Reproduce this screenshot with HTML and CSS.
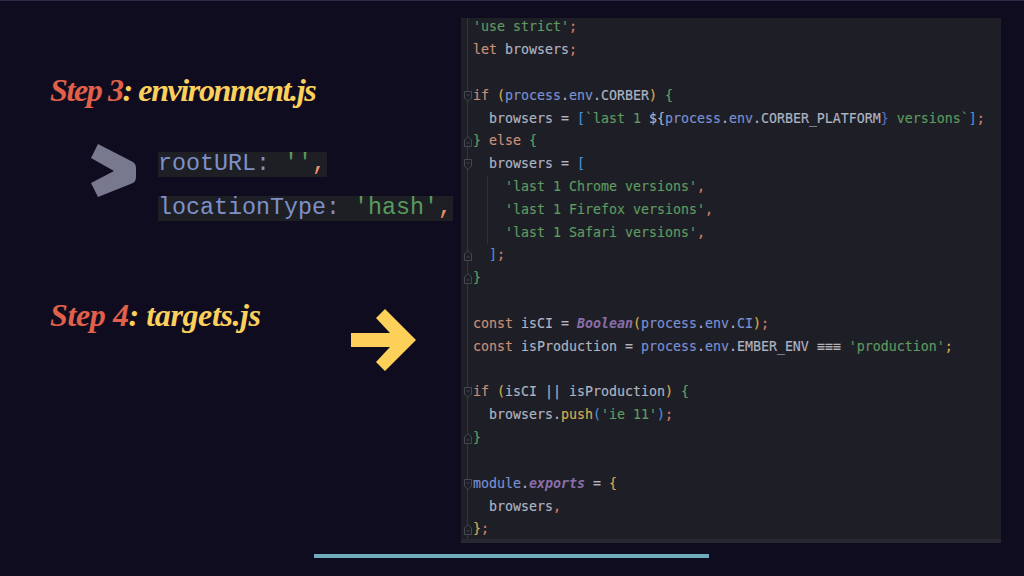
FILE: index.html
```html
<!DOCTYPE html>
<html lang="en">
<head>
<meta charset="utf-8">
<title>Step 3 and 4</title>
<link rel="stylesheet" href="styles.css">
</head>
<body>
<svg class="defs" width="0" height="0" aria-hidden="true">
  <symbol id="fold-down" viewBox="0 0 10 13"><path d="M1.5 1.5h7v6.5l-3.5 3.5-3.5-3.5z"/><path d="M3.5 5h3"/></symbol>
  <symbol id="fold-up" viewBox="0 0 10 13"><path d="M1.5 11.5h7v-6.5l-3.5-3.5-3.5 3.5z"/><path d="M3.5 8h3"/></symbol>
</svg>
<div class="slide">
  <main class="stage">
    <section class="steps">
      <h2 class="step-title step-three"><span class="step-num">Step 3</span>: environment.js</h2>
      <div class="config">
        <svg class="chevron" viewBox="0 0 50 58" aria-hidden="true">
          <path d="M8 1 43 19Q46 21 46 25V34Q46 38 43 40L8 54 1 40 24 28 1 15z"/>
        </svg>
        <div class="config-lines">
          <code class="config-line"><span class="prop">rootURL:</span> <span class="str">''</span><span class="comma">,</span></code>
          <code class="config-line"><span class="prop">locationType:</span> <span class="str">'hash'</span><span class="comma">,</span></code>
        </div>
      </div>
      <div class="step-row">
        <h2 class="step-title step-four"><span class="step-num">Step 4</span>: targets.js</h2>
        <svg class="arrow" viewBox="0 0 65 62" aria-hidden="true">
          <path d="M0 24H39L25 9 34 0 65 31 34 62 25 53 39 38H0z"/>
        </svg>
      </div>
    </section>
    <section class="editor">
      <div class="code">
        <div class="ln"><span class="s">'use strict'</span><span class="p">;</span></div>
        <div class="ln"><span class="k">let</span> browsers<span class="p">;</span></div>
        <div class="ln"></div>
        <div class="ln"><svg class="fold"><use href="#fold-down"/></svg><span class="k">if</span> <span class="y">(</span><span class="v">process</span>.<span class="v">env</span>.CORBER<span class="y">)</span> <span class="g">{</span></div>
        <div class="ln">  browsers = <span class="b">[</span><span class="s">`last 1 </span>${<span class="v">process</span>.<span class="v">env</span>.CORBER_PLATFORM<span class="b2">}</span><span class="s"> versions`</span><span class="b">]</span><span class="p">;</span></div>
        <div class="ln"><svg class="fold"><use href="#fold-up"/></svg><span class="g">}</span> <span class="k">else</span> <span class="g">{</span></div>
        <div class="ln"><svg class="fold"><use href="#fold-down"/></svg>  browsers = <span class="b">[</span></div>
        <div class="ln guide">    <span class="s">'last 1 Chrome versions'</span><span class="p">,</span></div>
        <div class="ln guide">    <span class="s">'last 1 Firefox versions'</span><span class="p">,</span></div>
        <div class="ln guide">    <span class="s">'last 1 Safari versions'</span><span class="p">,</span></div>
        <div class="ln"><svg class="fold"><use href="#fold-up"/></svg>  <span class="b">]</span><span class="p">;</span></div>
        <div class="ln"><svg class="fold"><use href="#fold-up"/></svg><span class="g">}</span></div>
        <div class="ln"></div>
        <div class="ln"><span class="k">const</span> isCI = <span class="m">Boolean</span><span class="y">(</span><span class="v">process</span>.<span class="v">env</span>.<span class="v">CI</span><span class="y">)</span><span class="p">;</span></div>
        <div class="ln"><span class="k">const</span> isProduction = <span class="v">process</span>.<span class="v">env</span>.EMBER_ENV ≡≡≡ <span class="s">'production'</span><span class="y">;</span></div>
        <div class="ln"></div>
        <div class="ln"><svg class="fold"><use href="#fold-down"/></svg><span class="k">if</span> <span class="y">(</span>isCI || isProduction<span class="y">)</span> <span class="g">{</span></div>
        <div class="ln">  browsers.<span class="y">push</span><span class="b">(</span><span class="s">'ie 11'</span><span class="b">)</span><span class="p">;</span></div>
        <div class="ln"><svg class="fold"><use href="#fold-up"/></svg><span class="g">}</span></div>
        <div class="ln"></div>
        <div class="ln"><svg class="fold"><use href="#fold-down"/></svg><span class="v">module</span>.<span class="m">exports</span> = <span class="y">{</span></div>
        <div class="ln">  browsers<span class="p">,</span></div>
        <div class="ln"><svg class="fold"><use href="#fold-up"/></svg><span class="y">}</span><span class="p">;</span></div>
      </div>
    </section>
  </main>
  <div class="progress"></div>
</div>
</body>
</html>
```
FILE: styles.css
```css
* { box-sizing: border-box; }
html, body { margin: 0; height: 100%; }
body { background: #100c20; overflow: hidden; }
.defs { position: absolute; }
.slide {
  width: 1024px;
  height: 576px;
  border-top: 1px solid #2c2a45;
  display: flex;
  flex-direction: column;
}
.stage { display: flex; height: 542px; padding-top: 17px; }
.steps { width: 461px; padding: 50px 0 0 50px; }
.step-title {
  margin: 0;
  font-family: "Liberation Serif", serif;
  font-style: italic;
  font-weight: 700;
  font-size: 32px;
  line-height: 44px;
  color: #fcd05c;
  white-space: nowrap;
}
.step-three { letter-spacing: -1.4px; }
.step-four { letter-spacing: -0.4px; }
.step-num { color: #e0604a; }
.config { display: flex; margin: 29px 0 0 40px; }
.chevron { width: 50px; height: 58px; margin-top: 2px; fill: #78788f; flex: none; }
.config-lines {
  display: flex;
  flex-direction: column;
  align-items: flex-start;
  gap: 19px;
  margin: 11px 0 0 18px;
}
.config-line {
  display: block;
  height: 25px;
  padding-right: 1px;
  background: #1d1f25;
  font-family: "Liberation Mono", monospace;
  font-size: 23.33px;
  line-height: 25px;
  color: #8091c9;
  white-space: pre;
}
.prop { color: #7f90c8; }
.str { color: #5a9a5c; }
.comma { color: #e6936f; }
.step-row { display: flex; margin-top: 72px; }
.arrow { width: 65px; height: 62px; margin: 16px 45px 0 auto; fill: #fdd05a; flex: none; }

.editor {
  width: 540px;
  height: 525px;
  background: #1e1f26;
  border-bottom: 4px solid #272732;
  overflow: hidden;
}
.code {
  margin-top: -1.8px;
  padding-left: 12px;
  font-family: "DejaVu Sans Mono", monospace;
  font-size: 13.29px;
  color: #aeb4c2;
  background: linear-gradient(#33343c, #33343c) 6px 0 / 1px 100% no-repeat;
}
.ln {
  position: relative;
  height: 22.83px;
  line-height: 22.83px;
  white-space: pre;
  -webkit-text-stroke: 0.15px currentColor;
}
.guide { background: linear-gradient(#2f3038, #2f3038) 14px 0 / 1px 100% no-repeat; }
.fold {
  position: absolute;
  left: -10px;
  top: 5px;
  width: 10px;
  height: 13px;
  fill: #1e1f26;
  stroke: #454751;
  stroke-width: 1;
}
.s { color: #5f9a60; }
.k { color: #cb8f77; }
.p { color: #d4806a; }
.y { color: #d8ac50; }
.g { color: #5fa063; }
.b { color: #4a8fd4; }
.b2 { color: #5570c0; }
.v { color: #7c90d2; }
.m { color: #8a6ea8; font-style: italic; font-weight: 700; -webkit-text-stroke: 0; }

.progress {
  width: 395px;
  height: 4px;
  margin: 11px 0 0 314px;
  background: #6eacbc;
}
```
